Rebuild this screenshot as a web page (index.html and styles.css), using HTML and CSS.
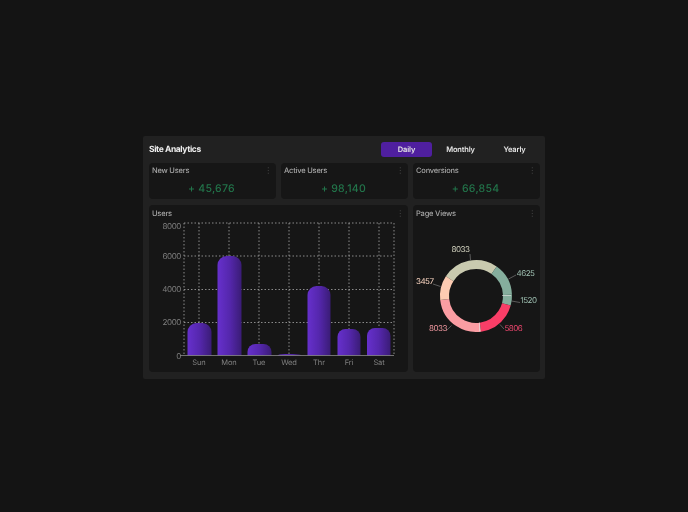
FILE: index.html
```html
<!DOCTYPE html>
<html lang="en">
<head>
    <meta charset="UTF-8">
    <title>Site Analytics</title>
    <link rel="stylesheet" href="styles.css">
</head>
<body>
    <div class="panel">
        <!-- Header -->
        <div class="header">
            <div class="title">Site Analytics</div>
            <div class="tabs">
                <div class="tab active">Daily</div>
                <div class="tab">Monthly</div>
                <div class="tab">Yearly</div>
            </div>
        </div>

        <!-- Stat cards -->
        <div class="stats">
            <div class="card stat">
                <div class="card-title">New Users<span class="more">⋮</span></div>
                <div class="stat-value">+ 45,676</div>
            </div>
            <div class="card stat">
                <div class="card-title">Active Users<span class="more">⋮</span></div>
                <div class="stat-value">+ 98,140</div>
            </div>
            <div class="card stat">
                <div class="card-title">Conversions<span class="more">⋮</span></div>
                <div class="stat-value">+ 66,854</div>
            </div>
        </div>

        <!-- Charts -->
        <div class="charts">
            <div class="card">
                <div class="card-title">Users<span class="more">⋮</span></div>
                <svg class="chart" width="259" height="151" viewBox="149 221 259 151">
                    <defs>
                        <linearGradient id="barFill" x1="0" x2="1" y1="0" y2="0">
                            <stop offset="0" stop-color="#6630cc"/>
                            <stop offset="0.5" stop-color="#5527ad"/>
                            <stop offset="1" stop-color="#3a1c76"/>
                        </linearGradient>
                    </defs>

                    <g class="grid">
                        <path d="M184 223H394M184 256H394M184 289.500H394M184 322.500H394"/>
                        <path d="M184 223V355M199 223V355M229 223V355M259 223V355M289 223V355M319 223V355M349 223V355M379 223V355M394 223V355"/>
                    </g>

                    <path class="bar" d="M187.500 355.500V332a9 9 0 0 1 9-9h6a9 9 0 0 1 9 9v23.500z"/>
                    <path class="bar" d="M217.500 355.500V265a9 9 0 0 1 9-9h6a9 9 0 0 1 9 9v90.500z"/>
                    <path class="bar" d="M247.500 355.500V352a8 8 0 0 1 8-8h8a8 8 0 0 1 8 8v3.500z"/>
                    <path class="bar" d="M277.500 355.500a8 1.500 0 0 1 8-1.500h8a8 1.500 0 0 1 8 1.500z"/>
                    <path class="bar" d="M307.500 355.500V295a9 9 0 0 1 9-9h5a9 9 0 0 1 9 9v60.500z"/>
                    <path class="bar" d="M337.500 355.500V337a8 8 0 0 1 8-8h7a8 8 0 0 1 8 8v18.500z"/>
                    <path class="bar" d="M367 355.500V336a8 8 0 0 1 8-8h7.500a8 8 0 0 1 8 8v19.500z"/>

                    <path class="axis" d="M180 355.500H394"/>

                    <g class="ticks">
                        <text x="181" y="229">8000</text>
                        <text x="181" y="259">6000</text>
                        <text x="181" y="292">4000</text>
                        <text x="181" y="325">2000</text>
                        <text x="181" y="358.500">0</text>
                    </g>
                    <g class="days">
                        <text x="199" y="365">Sun</text>
                        <text x="229" y="365">Mon</text>
                        <text x="259" y="365">Tue</text>
                        <text x="289" y="365">Wed</text>
                        <text x="319" y="365">Thr</text>
                        <text x="349" y="365">Fri</text>
                        <text x="379" y="365">Sat</text>
                    </g>
                </svg>
            </div>

            <div class="card">
                <div class="card-title">Page Views<span class="more">⋮</span></div>
                <svg class="chart" width="127" height="151" viewBox="413 221 127 151">
                    <g class="ring" transform="rotate(-146.8 476 296)">
                        <circle cx="476" cy="296" r="31.5" pathLength="31474" stroke="#c9caaf" stroke-dasharray="8033 23441"/>
                        <circle cx="476" cy="296" r="31.5" pathLength="31474" stroke="#85ae9d" stroke-dasharray="4625 26849" stroke-dashoffset="-8033"/>
                        <circle cx="476" cy="296" r="31.5" pathLength="31474" stroke="#85ae9d" stroke-dasharray="1520 29954" stroke-dashoffset="-12658"/>
                        <circle cx="476" cy="296" r="31.5" pathLength="31474" stroke="#f93e67" stroke-dasharray="5806 25668" stroke-dashoffset="-14178"/>
                        <circle cx="476" cy="296" r="31.5" pathLength="31474" stroke="#fb9da3" stroke-dasharray="8033 23441" stroke-dashoffset="-19984"/>
                        <circle cx="476" cy="296" r="31.5" pathLength="31474" stroke="#fccbb2" stroke-dasharray="3457 28017" stroke-dashoffset="-28017"/>
                    </g>
                    <path class="gap" d="M502 295.500H511M479.500 322.500V331.500"/>

                    <path class="leader" d="M470 254L470.500 260"/>
                    <path class="leader" d="M516 275L508.500 279"/>
                    <path class="leader" d="M520 302.500L511.500 301"/>
                    <path class="leader" d="M500 324.500L504 329"/>
                    <path class="leader" d="M451.500 325.500L447 330"/>
                    <path class="leader" d="M433 284L440.500 286.500"/>

                    <g class="labels">
                        <text x="451.500" y="252" fill="#d8d8c4">8033</text>
                        <text x="516.500" y="276" fill="#9fc0b2">4625</text>
                        <text x="520.500" y="303" fill="#9fc0b2">1520</text>
                        <text x="504.500" y="331" fill="#f0476f">5806</text>
                        <text x="429" y="331" fill="#f49aa2">8033</text>
                        <text x="416" y="284" fill="#fbd6c2">3457</text>
                    </g>
                </svg>
            </div>
        </div>
    </div>
</body>
</html>
```

FILE: styles.css
```css
* {
    margin: 0;
    padding: 0;
    box-sizing: border-box;
}

body {
    font-family: Inter, "Liberation Sans", sans-serif;
    text-rendering: geometricPrecision;
    background: #141414;
    display: flex;
    justify-content: center;
    padding-top: 136px;
    height: 100vh;
    overflow: hidden;
}

.panel {
    width: 402px;
    height: 243px;
    background: #212121;
    border-radius: 2px;
    padding: 0 5px 0 6px;
    will-change: transform; /* grayscale text */
}

/* Header */
.header {
    height: 27px;
    display: flex;
    justify-content: space-between;
    align-items: center;
}

.title {
    font-size: 8.5px;
    font-weight: 700;
    letter-spacing: -0.4px;
    color: #ededed;
}

.tabs {
    display: flex;
    gap: 3px;
}

.tab {
    width: 51px;
    height: 15px;
    line-height: 15px;
    text-align: center;
    font-size: 7.5px;
    font-weight: 600;
    letter-spacing: -0.15px;
    color: #e4e4e4;
    border-radius: 3px;
}

.tab.active {
    background: #4f1f9f;
}

/* Cards */
.stats {
    display: grid;
    grid-template-columns: repeat(3, 127px);
    gap: 5px;
    margin-bottom: 6px;
}

.charts {
    display: grid;
    grid-template-columns: 259px 127px;
    gap: 5px;
}

.card {
    background: #161616;
    border-radius: 4px;
}

.stat {
    height: 36px;
}

.card-title {
    height: 16px;
    padding: 0 4px 0 3px;
    display: flex;
    justify-content: space-between;
    align-items: center;
    font-size: 7.5px;
    font-weight: 500;
    letter-spacing: -0.2px;
    color: #a6a6a6;
}

.stat .card-title {
    height: 14px;
}

.more {
    font-size: 8px;
    color: #4a4a4a;
}

.stat-value {
    text-align: center;
    padding-right: 2px;
    font-size: 10.5px;
    font-weight: 500;
    letter-spacing: 0.25px;
    line-height: 23px;
    color: #22744a;
}

.chart {
    display: block;
}

/* Bar chart */
.grid path {
    fill: none;
    stroke: #a8a8a8;
    stroke-width: 0.8;
    stroke-dasharray: 1.5 2;
}

.axis {
    fill: none;
    stroke: #8a8a8a;
    stroke-width: 0.8;
}

.bar {
    fill: url(#barFill);
}

.ticks text {
    font-size: 8px;
    letter-spacing: -0.4px;
    fill: #808080;
    text-anchor: end;
}

.days text {
    font-size: 7.5px;
    letter-spacing: -0.1px;
    fill: #808080;
    text-anchor: middle;
}

/* Donut */
.ring circle {
    fill: none;
    stroke-width: 9;
}

.gap {
    fill: none;
    stroke: #e8e8e8;
    stroke-width: 0.6;
}

.leader {
    fill: none;
    stroke: #8a8a8a;
    stroke-width: 0.6;
}

.labels text {
    font-size: 8px;
    letter-spacing: -0.5px;
}
```
